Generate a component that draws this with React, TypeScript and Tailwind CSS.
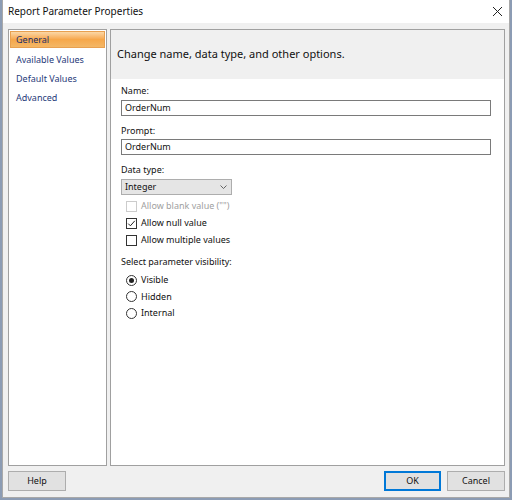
import React from "react";

const font = { fontFamily: '"Noto Sans", "Open Sans", sans-serif' };

function Checkbox({ checked, disabled, label }: { checked?: boolean; disabled?: boolean; label: string }) {
  return (
    <div className="flex items-center h-[16px] pl-[5px] gap-[4px]">
      <div
        className={
          "w-[11px] h-[11px] border flex items-center justify-center bg-white " +
          (disabled ? "border-[#cccccc]" : "border-[#333333]")
        }
      >
        {checked && (
          <svg width="9" height="9" viewBox="0 0 9 9">
            <path d="M1.2 4.6 L3.4 6.8 L7.8 1.8" fill="none" stroke="#222" strokeWidth="1" />
          </svg>
        )}
      </div>
      <span className={"text-[9px] " + (disabled ? "text-[#a0a0a0]" : "text-[#111]")}>{label}</span>
    </div>
  );
}

function Radio({ checked, label }: { checked?: boolean; label: string }) {
  return (
    <div className="flex items-center h-[16px] pl-[5px] gap-[4px]">
      <div className="w-[11px] h-[11px] rounded-full border border-[#333333] bg-white flex items-center justify-center">
        {checked && <div className="w-[5px] h-[5px] rounded-full bg-[#222]" />}
      </div>
      <span className="text-[9px] text-[#111]">{label}</span>
    </div>
  );
}

export default function App() {
  return (
    <div className="w-[512px] h-[500px] bg-[#8c9cb4] pl-[2px] pr-[2px] pb-[2px] overflow-hidden" style={font}>
      <div className="w-full h-full bg-[#f0f0f0] border-l border-r border-b border-[#a9a9a9] flex flex-col">
        <div className="h-[23px] bg-white flex items-center justify-between pl-[5px] pr-[6px] shrink-0">
          <span className="text-[10px] text-[#111]">Report Parameter Properties</span>
          <svg width="11" height="11" viewBox="0 0 11 11">
            <path d="M1 1 L10 10 M10 1 L1 10" stroke="#222" strokeWidth="1" />
          </svg>
        </div>
        <div className="flex-1 flex flex-col pl-[5px] pr-[4px] pt-[6px]">
          <div className="flex gap-[3px] h-[437px]">
            <div className="w-[99px] border border-[#a0a0a0] bg-white p-[1px] flex flex-col">
              <div className="h-[17px] bg-gradient-to-b from-[#fbd7a5] via-[#f6a74a] to-[#f3b766] flex items-center pl-[5px] border border-[#e8a050]">
                <span className="text-[9px] text-[#1a2f6a]">General</span>
              </div>
              <div className="h-[19px] mt-[2px] flex items-center pl-[6px] text-[9px] text-[#1f3a7a]">Available Values</div>
              <div className="h-[19px] flex items-center pl-[6px] text-[9px] text-[#1f3a7a]">Default Values</div>
              <div className="h-[19px] flex items-center pl-[6px] text-[9px] text-[#1f3a7a]">Advanced</div>
            </div>
            <div className="flex-1 border border-[#a0a0a0] bg-white flex flex-col">
              <div className="h-[49px] bg-[#f0f0f0] flex items-center pl-[6px] shrink-0">
                <span className="text-[11px] text-[#111]">Change name, data type, and other options.</span>
              </div>
              <div className="pl-[10px] pr-[13px] pt-[5px] flex flex-col">
                <div className="text-[9px] text-[#111] h-[13px] leading-[13px]">Name:</div>
                <div className="mt-[3px] h-[16px] border border-[#7a7a7a] flex items-center pl-[3px] text-[9px] text-[#111]">OrderNum</div>
                <div className="mt-[8px] text-[9px] text-[#111] h-[13px] leading-[13px]">Prompt:</div>
                <div className="mt-[2px] h-[16px] border border-[#7a7a7a] flex items-center pl-[3px] text-[9px] text-[#111]">OrderNum</div>
                <div className="mt-[8px] text-[9px] text-[#111] h-[13px] leading-[13px]">Data type:</div>
                <div className="mt-[3px] w-[111px] h-[16px] border border-[#adadad] bg-[#e5e5e5] flex items-center justify-between pl-[3px] pr-[4px]">
                  <span className="text-[9px] text-[#111]">Integer</span>
                  <svg width="7" height="4" viewBox="0 0 7 4">
                    <path d="M0.5 0.5 L3.5 3.5 L6.5 0.5" fill="none" stroke="#555" strokeWidth="0.9" />
                  </svg>
                </div>
                <div className="mt-[3px] flex flex-col gap-[1px]">
                  <Checkbox disabled label={'Allow blank value ("")'} />
                  <Checkbox checked label="Allow null value" />
                  <Checkbox label="Allow multiple values" />
                </div>
                <div className="mt-[7px] text-[9px] text-[#111] h-[13px] leading-[13px]">Select parameter visibility:</div>
                <div className="mt-[4px] flex flex-col gap-[0.5px]">
                  <Radio checked label="Visible" />
                  <Radio label="Hidden" />
                  <Radio label="Internal" />
                </div>
              </div>
            </div>
          </div>
          <div className="flex justify-between items-center mt-[5px]">
            <div className="w-[58px] h-[20px] bg-[#e1e1e1] border border-[#adadad] flex items-center justify-center text-[9px] text-[#111]">Help</div>
            <div className="flex gap-[6px]">
              <div className="w-[57px] h-[20px] bg-[#e1e1e1] border-2 border-[#0078d7] flex items-center justify-center text-[9px] text-[#111]">OK</div>
              <div className="w-[58px] h-[20px] bg-[#e1e1e1] border border-[#adadad] flex items-center justify-center text-[9px] text-[#111]">Cancel</div>
            </div>
          </div>
        </div>
      </div>
    </div>
  );
}
